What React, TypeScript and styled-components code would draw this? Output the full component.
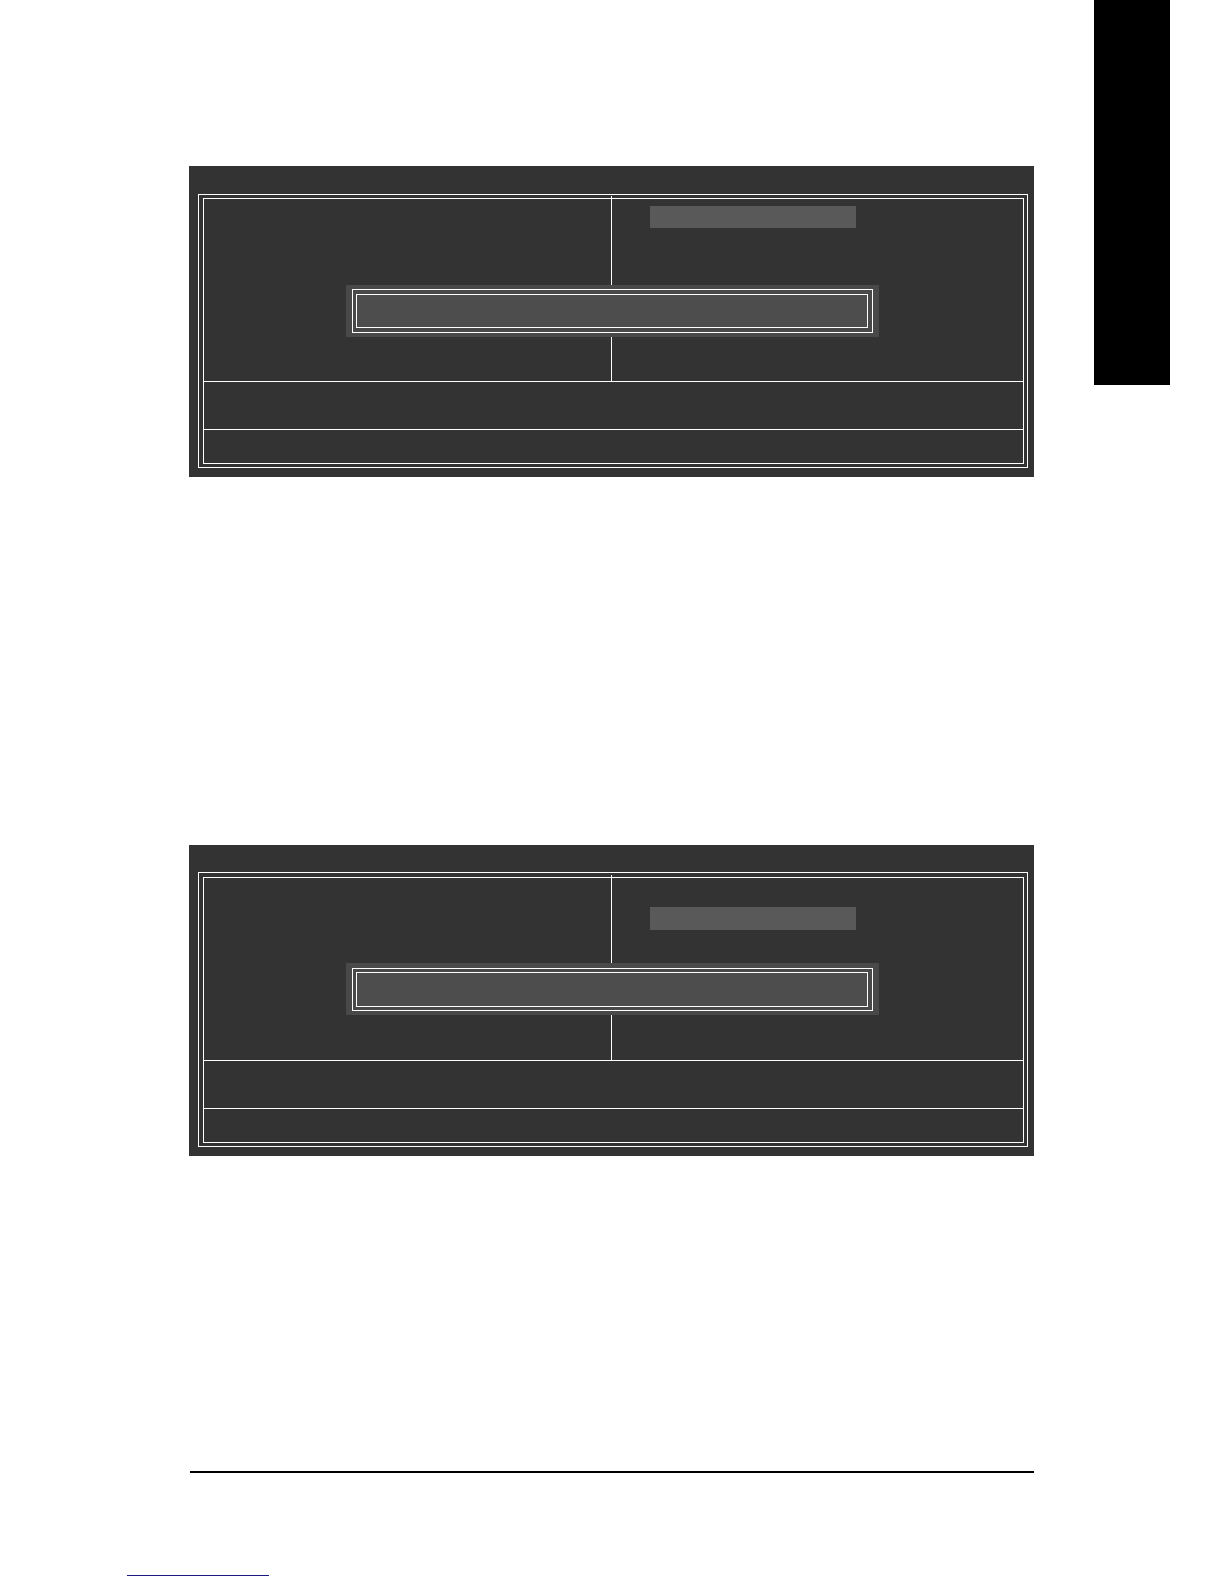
import React from "react";
import styled, { createGlobalStyle } from "styled-components";

const GlobalStyle = createGlobalStyle`
  *, *::before, *::after { box-sizing: border-box; }
  body {
    margin: 0;
    background: #ffffff;
    font-family: "Liberation Sans", Arial, sans-serif;
  }
`;

const Page = styled.div`
  display: grid;
  grid-template-columns: 189px minmax(0, 1fr) 190px;
`;

const Content = styled.main`
  grid-column: 2;
  display: flex;
  flex-direction: column;
  gap: 368px;
  padding-top: 166px;
`;

const SideTab = styled.aside`
  grid-column: 3;
  width: 76px;
  height: 385px;
  margin-left: 60px;
  background: #000000;
`;

const Screen = styled.section<{ $titleHeight: number }>`
  padding: ${(p) => p.$titleHeight}px 6px 9px 9px;
  background: #333333;
`;

const OuterFrame = styled.div<{ $topGap: number }>`
  padding: ${(p) => p.$topGap}px 3px 3px 4px;
  border: 1px solid #ffffff;
`;

const InnerFrame = styled.div`
  border: 1px solid #ffffff;
`;

const Columns = styled.div`
  position: relative;
  display: grid;
  grid-template-columns: 407fr 412fr;
  height: 182px;
`;

/* The divider pokes through the inner frame line at the top. */
const MenuColumn = styled.div<{ $offset: number }>`
  grid-column: 2;
  margin-top: -3px;
  padding: ${(p) => p.$offset}px 38px 0;
  border-left: 1px solid #ffffff;
`;

const Highlight = styled.div<{ $height: number }>`
  max-width: 206px;
  height: ${(p) => p.$height}px;
  background: #595959;
`;

const HelpRow = styled.div<{ $height: number }>`
  height: ${(p) => p.$height}px;
  border-top: 1px solid #ffffff;
`;

const Prompt = styled.div<{ $top: number; $padTop: number }>`
  position: absolute;
  top: ${(p) => p.$top}px;
  left: 142px;
  right: 144px;
  display: flex;
  height: 52px;
  padding: ${(p) => p.$padTop}px 6px 4px;
  background: #494949;
`;

const PromptFrame = styled.div<{ $gap: number }>`
  flex: 1;
  display: flex;
  padding: ${(p) => p.$gap}px 4px ${(p) => p.$gap}px 3px;
  border: 1px solid #ffffff;
`;

const PromptBody = styled.div`
  flex: 1;
  border: 1px solid #ffffff;
  background: #4d4d4d;
`;

const Footer = styled.footer`
  grid-column: 1 / -1;
  padding: 315px 190px 8px 127px;
`;

const Rule = styled.hr`
  height: 2px;
  margin: 0 0 102px 63px;
  border: 0;
  background: #000000;
`;

const FooterLink = styled.a`
  display: block;
  width: 142px;
  height: 1px;
  background: #1a1a80;
`;

type ScreenData = {
  titleHeight: number;
  topGap: number;
  menuOffset: number;
  menuHeight: number;
  promptTop: number;
  promptPad: number;
  promptGap: number;
};

const screens: ScreenData[] = [
  {
    titleHeight: 28,
    topGap: 3,
    menuOffset: 10,
    menuHeight: 22,
    promptTop: 86,
    promptPad: 4,
    promptGap: 4,
  },
  {
    titleHeight: 27,
    topGap: 4,
    menuOffset: 32,
    menuHeight: 23,
    promptTop: 85,
    promptPad: 5,
    promptGap: 3,
  },
];

function SetupScreen({ data }: { data: ScreenData }) {
  return (
    <Screen $titleHeight={data.titleHeight}>
      <OuterFrame $topGap={data.topGap}>
        <InnerFrame>
          <Columns>
            <MenuColumn $offset={data.menuOffset}>
              <Highlight $height={data.menuHeight} />
            </MenuColumn>
            <Prompt $top={data.promptTop} $padTop={data.promptPad}>
              <PromptFrame $gap={data.promptGap}>
                <PromptBody />
              </PromptFrame>
            </Prompt>
          </Columns>
          <HelpRow $height={48} />
          <HelpRow $height={34} />
        </InnerFrame>
      </OuterFrame>
    </Screen>
  );
}

export default function App() {
  return (
    <>
      <GlobalStyle />
      <Page>
        <Content>
          {screens.map((data, i) => (
            <SetupScreen key={i} data={data} />
          ))}
        </Content>
        <SideTab />
        <Footer>
          <Rule />
          <FooterLink href="#" />
        </Footer>
      </Page>
    </>
  );
}
